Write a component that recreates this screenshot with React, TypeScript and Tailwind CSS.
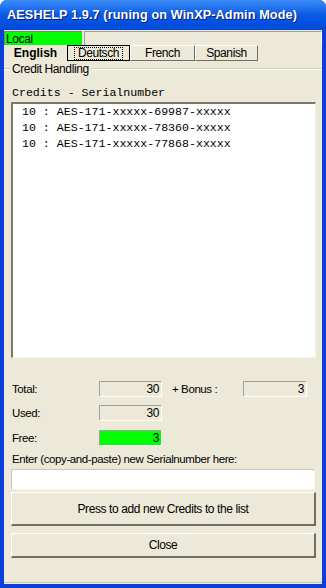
const SERIALS = [
  '10 : AES-171-xxxxx-69987-xxxxx',
  '10 : AES-171-xxxxx-78360-xxxxx',
  '10 : AES-171-xxxxx-77868-xxxxx',
];

const ui = "font-['Liberation_Sans',sans-serif] text-[11.5px] leading-[14px] tracking-[-0.4px] text-black";
const mono = "font-['Liberation_Mono','Courier_New',monospace] text-[11.6px] tracking-normal text-black";

function Field({ value, green, className = '' }: { value: string; green?: boolean; className?: string }) {
  return (
    <div
      className={`h-[16px] w-[63px] border-t border-l border-[#A0A0A0] border-r border-b border-r-white border-b-white flex items-center justify-end pr-[2px] text-[12px] ${green ? 'bg-[#00FF00]' : 'bg-[#ECE9D8]'} ${className}`}
    >
      {value}
    </div>
  );
}

function TabButton({ label, width, bold, focus }: { label: string; width: string; bold?: boolean; focus?: boolean }) {
  if (bold) {
    return (
      <div className={`${width} h-full flex items-center justify-center font-bold text-[12px] tracking-normal`}>
        {label}
      </div>
    );
  }
  return (
    <div
      className={`${width} h-full flex items-center justify-center border text-[12px] ${focus ? 'border-black' : 'border-t-white border-l-white border-r-[#716F64] border-b-[#716F64]'}`}
    >
      <span className={focus ? 'outline outline-1 outline-dotted outline-black px-[3px] leading-[11px]' : ''}>{label}</span>
    </div>
  );
}

export default function App() {
  return (
    <div className={`w-[326px] h-[588px] bg-[#0A3FD8] rounded-t-[7px] flex flex-col overflow-hidden ${ui}`}>
      {/* title bar */}
      <div className="h-[30px] shrink-0 flex items-center px-[7px] bg-gradient-to-b from-[#3C8CF8] via-[#0A5AE6] to-[#0048D8]">
        <span className="font-bold text-[12.7px] text-white tracking-[0.1px] [text-shadow:1px_1px_0_#0A1C6A]">
          AESHELP 1.9.7 (runing on WinXP-Admin Mode)
        </span>
      </div>

      {/* client area */}
      <div className="flex-1 mx-[4px] mb-[4px] bg-[#ECE9D8] flex flex-col">
        {/* status row */}
        <div className="h-[14px] mt-[1px] flex">
          <div className="w-[78px] bg-[#00FF00] border-t border-l border-[#808080] flex items-center pl-[1px] text-[12px]">
            Local
          </div>
          <div className="flex-1 ml-[2px] border-t border-l border-[#A0A0A0] border-r border-r-white" />
        </div>

        {/* language tabs */}
        <div className="h-[16px] flex">
          <TabButton label="English" width="w-[63px]" bold />
          <TabButton label="Deutsch" width="w-[63px]" focus />
          <TabButton label="French" width="w-[65px]" />
          <TabButton label="Spanish" width="w-[63px]" />
        </div>

        {/* group box header */}
        <div className="mt-[1px] h-[13px] flex items-center">
          <div className="w-[6px] border-t border-t-[#D0D0BF] border-b border-b-white" />
          <span className="px-[2px] text-[12px]">Credit Handling</span>
          <div className="flex-1 border-t border-t-[#D0D0BF] border-b border-b-white" />
        </div>

        {/* list */}
        <div className={`${mono} mt-[11px] pl-[8px] leading-[14px]`}>Credits - Serialnumber</div>
        <div className="mt-[2px] ml-[7px] mr-[6px] h-[256px] shrink-0 bg-white border-t-2 border-l-2 border-t-[#7A7868] border-l-[#7A7868] border-r border-b border-r-[#F4F3EE] border-b-[#F4F3EE] pl-[9px]">
          {SERIALS.map(s => (
            <div key={s} className={`${mono} leading-[16px] whitespace-pre`}>{s}</div>
          ))}
        </div>

        {/* totals */}
        <div className="h-[16px] mt-[23px] ml-[8px] flex items-center">
          <span className="w-[87px]">Total:</span>
          <Field value="30" />
          <span className="ml-[10px] w-[71px]">+ Bonus :</span>
          <Field value="3" className="w-[64px]" />
        </div>
        <div className="h-[16px] mt-[8px] ml-[8px] flex items-center">
          <span className="w-[87px]">Used:</span>
          <Field value="30" />
        </div>
        <div className="h-[16px] mt-[9px] ml-[8px] flex items-center">
          <span className="w-[87px]">Free:</span>
          <Field value="3" green />
        </div>

        {/* new serial */}
        <div className="mt-[6px] ml-[8px] h-[14px]">Enter (copy-and-paste) new Serialnumber here:</div>
        <input
          className="mt-[3px] ml-[7px] mr-[7px] h-[21px] shrink-0 bg-white border border-t-[#C9C7BA] border-l-[#C9C7BA] border-r-[#F4F3EE] border-b-[#F4F3EE] outline-none"
          defaultValue=""
        />
        <button className="mt-[2px] ml-[7px] mr-[6px] h-[34px] shrink-0 bg-[#ECE9D8] border-t border-l border-t-white border-l-white border-r-2 border-b-2 border-r-[#716F64] border-b-[#716F64] text-[12px]">
          Press to add new Credits to the list
        </button>
        <button className="mt-[7px] ml-[7px] mr-[6px] h-[25px] shrink-0 bg-[#ECE9D8] border-t border-l border-t-white border-l-white border-r-2 border-b-2 border-r-[#716F64] border-b-[#716F64] text-[12px]">
          Close
        </button>
        <div className="flex-1" />
        <div className="h-[2px] border-t border-[#C9C7BA]" />
      </div>
    </div>
  );
}
